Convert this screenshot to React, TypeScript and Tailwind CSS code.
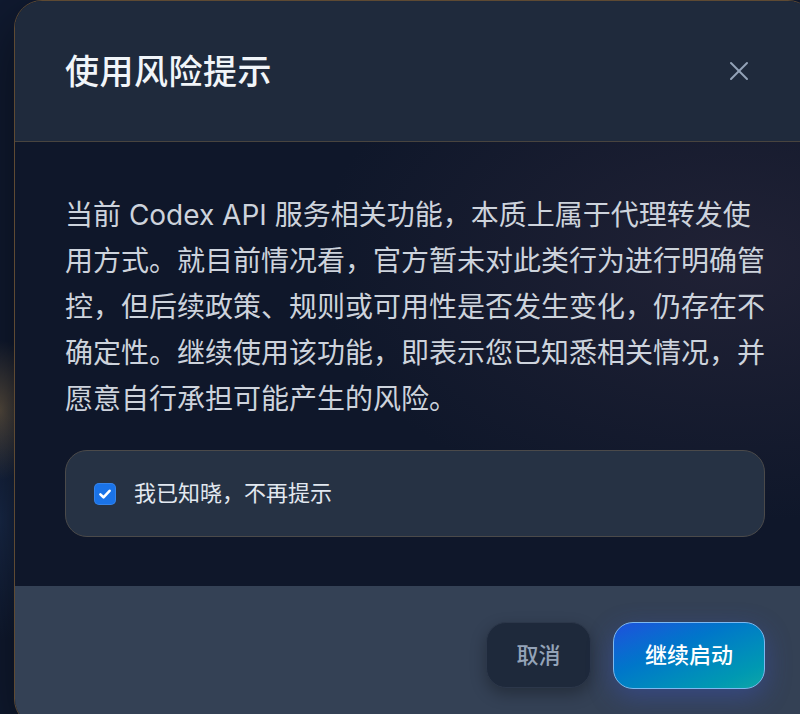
import { X } from "lucide-react";

function CheckBox() {
  return (
    <span className="flex h-[22px] w-[22px] shrink-0 items-center justify-center rounded-[5px] bg-[#1a73e8] shadow-[inset_0_0_0_1px_rgba(255,255,255,0.12)]">
      <svg width="16" height="16" viewBox="0 0 16 16" fill="none">
        <path d="M3.4 8.4 6.5 11.3 12.6 4.8" stroke="white" strokeWidth="2.6" strokeLinecap="round" strokeLinejoin="round" />
      </svg>
    </span>
  );
}

export default function App() {
  return (
    <div
      className="relative h-[714px] w-[800px] overflow-hidden bg-[#101a30] bg-[radial-gradient(ellipse_40px_70px_at_0px_410px,rgba(170,135,80,0.45),transparent),radial-gradient(ellipse_60px_120px_at_0px_520px,rgba(40,70,120,0.35),transparent)]"
      style={{ fontFamily: '"Inter", "Noto Sans CJK SC", sans-serif' }}
    >
      <div className="ml-[14px] w-[802px] overflow-hidden rounded-[28px] border-[1.5px] border-[#5e4a33] shadow-[0_20px_60px_rgba(0,0,0,0.5)]">
        {/* header */}
        <div className="flex h-[141px] items-center justify-between border-b border-[#48443f] bg-[#1f2a3c] pl-[50px] pr-[56px]">
          <h2 className="text-[34px] font-medium tracking-[0.5px] text-[#f1f5f9]">使用风险提示</h2>
          <button className="flex h-[40px] w-[40px] items-center justify-center text-[#94a3b8]">
            <X size={32} strokeWidth={1.5} />
          </button>
        </div>

        {/* body */}
        <div className="bg-[#0f172a] bg-[radial-gradient(ellipse_420px_260px_at_720px_120px,rgba(40,38,58,0.7),transparent)] px-[50px] pb-[49px] pt-[50px]">
          <p className="w-[701px] text-[28px] leading-[46px] text-[#cdd3dc]">
            当前 Codex API 服务相关功能，本质上属于代理转发使用方式。就目前情况看，官方暂未对此类行为进行明确管控，但后续政策、规则或可用性是否发生变化，仍存在不确定性。继续使用该功能，即表示您已知悉相关情况，并愿意自行承担可能产生的风险。
          </p>
          <label className="mt-[28px] flex h-[87px] items-center gap-[18px] rounded-[22px] border-[1.5px] border-[#4b4a4a] bg-[#263244] pl-[28px]">
            <CheckBox />
            <span className="text-[22px] text-[#e2e8f0]">我已知晓，不再提示</span>
          </label>
        </div>

        {/* footer */}
        <div className="flex justify-end gap-[22px] bg-[#344155] px-[50px] pb-[37px] pt-[36px]">
          <button className="h-[66px] w-[105px] rounded-[20px] border border-[#2c374a] bg-[#1e293b] text-[22px] font-medium text-[#94a3b8] shadow-[0_6px_16px_rgba(0,0,0,0.3)]">
            取消
          </button>
          <button className="h-[67px] w-[152px] rounded-[20px] border border-[#7cb8f0] bg-gradient-to-br from-[#1d4fdc] to-[#10a6a6] text-[22px] font-medium text-white shadow-[0_8px_26px_rgba(59,90,220,0.35)]">
            继续启动
          </button>
        </div>
      </div>
    </div>
  );
}
